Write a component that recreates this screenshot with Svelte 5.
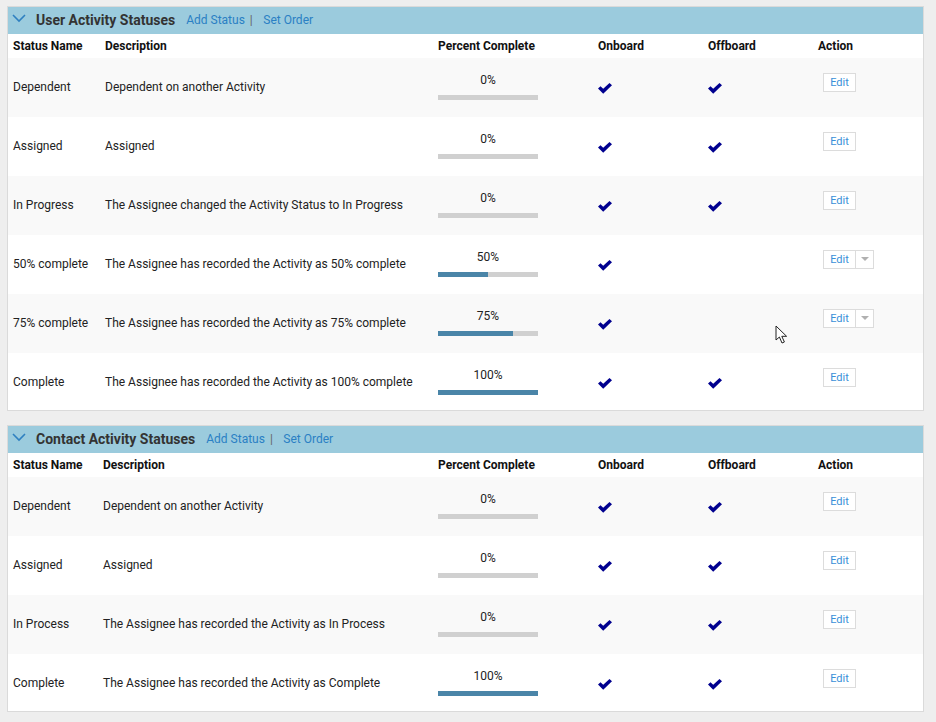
<script>
    const sections = [
        {
            title: "User Activity Statuses",
            first: 92,
            rows: [
                { name: "Dependent", desc: "Dependent on another Activity", pct: 0, on: true, off: true },
                { name: "Assigned", desc: "Assigned", pct: 0, on: true, off: true },
                { name: "In Progress", desc: "The Assignee changed the Activity Status to In Progress", pct: 0, on: true, off: true },
                { name: "50% complete", desc: "The Assignee has recorded the Activity as 50% complete", pct: 50, on: true, off: false, menu: true },
                { name: "75% complete", desc: "The Assignee has recorded the Activity as 75% complete", pct: 75, on: true, off: false, menu: true },
                { name: "Complete", desc: "The Assignee has recorded the Activity as 100% complete", pct: 100, on: true, off: true }
            ]
        },
        {
            title: "Contact Activity Statuses",
            first: 90,
            rows: [
                { name: "Dependent", desc: "Dependent on another Activity", pct: 0, on: true, off: true },
                { name: "Assigned", desc: "Assigned", pct: 0, on: true, off: true },
                { name: "In Process", desc: "The Assignee has recorded the Activity as In Process", pct: 0, on: true, off: true },
                { name: "Complete", desc: "The Assignee has recorded the Activity as Complete", pct: 100, on: true, off: true }
            ]
        }
    ];
</script>

{#snippet check()}
    <svg class="check" width="14" height="11" viewBox="0 0 14 11">
        <path d="M0 5.6 L2.5 3.3 L5.2 5.8 L11.5 0 L14 2.3 L5.2 10.8 Z" fill="#00008f" />
    </svg>
{/snippet}

<div class="page">
    {#each sections as section}
        <section class="card" style="--first: {section.first}px">
            <header class="bar">
                <svg class="chevron" width="14" height="9" viewBox="0 0 14 9">
                    <path d="M1 1 L7 7 L13 1" fill="none" stroke="#2f80c0" stroke-width="1.6" />
                </svg>
                <h2>{section.title}</h2>
                <a href="#add">Add Status</a>
                <span class="sep">|</span>
                <a href="#order">Set Order</a>
            </header>
            <div class="row head">
                <div>Status Name</div>
                <div>Description</div>
                <div>Percent Complete</div>
                <div>Onboard</div>
                <div>Offboard</div>
                <div>Action</div>
            </div>
            {#each section.rows as row}
                <div class="row item">
                    <div>{row.name}</div>
                    <div>{row.desc}</div>
                    <div class="progress">
                        <div class="pct">{row.pct}%</div>
                        <div class="track"><div class="fill" style="width: {row.pct}%"></div></div>
                    </div>
                    <div class="mark">{#if row.on}{@render check()}{/if}</div>
                    <div class="mark">{#if row.off}{@render check()}{/if}</div>
                    <div class="action">
                        <button>Edit</button>
                        {#if row.menu}
                            <button class="caret" aria-label="More"><span></span></button>
                        {/if}
                    </div>
                </div>
            {/each}
        </section>
    {/each}
    <svg class="cursor" width="14" height="20" viewBox="0 0 14 20">
        <path d="M1 1 L1 15 L4.4 12 L7 18 L9.4 17 L6.8 11.3 L11.6 11.3 Z" fill="#fff" stroke="#222" stroke-width="1" />
    </svg>
</div>

<style>
    :global(body) {
        background: #eeeeee;
    }
    .page {
        position: relative;
        height: 722px;
        box-sizing: border-box;
        padding: 6px 12px 0 7px;
        display: flex;
        flex-direction: column;
        gap: 14px;
        font-family: Roboto, sans-serif;
        font-size: 12px;
        color: #222;
    }
    .card {
        background: #fff;
        border: 1px solid #dadada;
    }
    .bar {
        height: 27px;
        box-sizing: border-box;
        padding: 0 0 2px 4px;
        background: #9bcbdd;
        display: flex;
        align-items: center;
    }
    .chevron {
        margin: 0 10px 3px 0;
    }
    h2 {
        margin: 0 11px 0 0;
        font-size: 14px;
        font-weight: 700;
        color: #333;
    }
    .bar a {
        color: #2a80c4;
        text-decoration: none;
    }
    .sep {
        color: #666;
        margin: 0 10.5px 0 5px;
    }
    .row {
        display: grid;
        grid-template-columns: var(--first) calc(425px - var(--first)) 160px 110px 110px 1fr;
        padding-left: 5px;
        align-items: center;
    }
    .head {
        height: 24px;
        font-weight: 700;
        color: #111;
    }
    .item {
        height: 59px;
        box-sizing: border-box;
        padding-bottom: 2px;
        background: #fff;
    }
    .item:nth-child(odd) {
        background: #f9f9f9;
    }
    .item:last-child {
        height: 57px;
        padding-bottom: 0;
    }
    .progress {
        width: 100px;
        padding-top: 2px;
    }
    .pct {
        text-align: center;
        line-height: 14px;
        margin-bottom: 8px;
    }
    .track {
        height: 5px;
        background: #d0d0d0;
        margin-bottom: 3px;
    }
    .fill {
        height: 100%;
        background: #4a85a8;
    }
    .mark {
        height: 11px;
        padding-top: 4px;
    }
    .check {
        display: block;
    }
    .action {
        display: flex;
        padding: 0 0 9px 5px;
    }
    button {
        height: 19px;
        width: 33px;
        padding: 0;
        background: #fff;
        border: 1px solid #dcdcdc;
        color: #3a8fd8;
        font-family: Roboto, sans-serif;
        font-size: 11px;
    }
    .caret {
        width: 19px;
        margin-left: -1px;
        display: flex;
        align-items: center;
        justify-content: center;
    }
    .caret span {
        width: 0;
        height: 0;
        border: 4px solid transparent;
        border-top: 4px solid #b0b0b0;
        border-bottom: 0;
    }
    .cursor {
        position: absolute;
        left: 775px;
        top: 325px;
    }
</style>
